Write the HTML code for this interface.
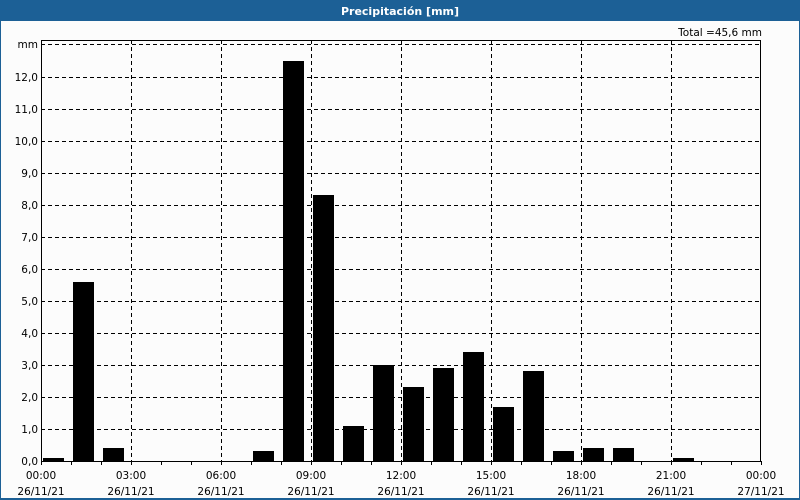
<!DOCTYPE html>
<html><head><meta charset="utf-8"><style>
html,body{margin:0;padding:0;width:800px;height:500px;overflow:hidden;background:#fcfcfc}
</style></head><body>
<svg width="800" height="500" xmlns="http://www.w3.org/2000/svg" font-family="'DejaVu Sans','Liberation Sans',sans-serif" font-size="10.5">
<rect x="0" y="0" width="800" height="500" fill="#1c6096"/>
<rect x="1" y="21" width="798" height="477" fill="#fcfcfc"/>
<text x="400" y="15" fill="#fff" font-weight="bold" text-anchor="middle" font-size="11">Precipitación [mm]</text>
<text x="762" y="36" text-anchor="end" fill="#000">Total =45,6 mm</text>
<g stroke="#000" stroke-width="1" stroke-dasharray="4,3" fill="none">
<line x1="41" y1="44.5" x2="760" y2="44.5"/>
<g id="h"></g>
</g>
<g id="grid" stroke="#000" stroke-width="1" stroke-dasharray="4,3"></g>
<g id="bars" fill="#000"></g>
<g id="labels" fill="#000"></g>
<rect x="41.5" y="40.5" width="719" height="421" fill="none" stroke="#000"/>
<text x="38" y="48" text-anchor="end">mm</text>
</svg>
<script>
var ns="http://www.w3.org/2000/svg",g=document.getElementById("grid"),b=document.getElementById("bars"),l=document.getElementById("labels");
function el(p,t,a){var e=document.createElementNS(ns,t);for(var k in a)e.setAttribute(k,a[k]);p.appendChild(e);return e;}
for(var i=1;i<=12;i++){var y=461-32*i+.5;el(g,"line",{x1:41,y1:y,x2:760,y2:y});}
for(var i=1;i<8;i++){var x=41+90*i+.5;el(g,"line",{x1:x,y1:40,x2:x,y2:461});}
for(var i=0;i<=24;i++){var x=41+30*i+.5;el(l,"line",{x1:x,y1:461,x2:x,y2:465,stroke:"#000"});}
for(var i=0;i<=12;i++){var t=el(l,"text",{x:38,y:461-32*i+4,"text-anchor":"end"});t.textContent=i+",0";}
var v=[0.1,5.6,0.4,0,0,0,0,0.3,12.5,8.3,1.1,3.0,2.3,2.9,3.4,1.7,2.8,0.3,0.4,0.4,0,0.1,0,0];
v.forEach(function(h,i){if(h>0){var hh=Math.round(h*32);el(b,"rect",{x:43+30*i,y:461-hh,width:21,height:hh});}});
var tm=["00:00","03:00","06:00","09:00","12:00","15:00","18:00","21:00","00:00"];
for(var i=0;i<9;i++){var x=41+90*i;var a=el(l,"text",{x:x,y:479,"text-anchor":"middle"});a.textContent=tm[i];
var d=el(l,"text",{x:x,y:495,"text-anchor":"middle"});d.textContent=i==8?"27/11/21":"26/11/21";}
</script>
</body></html>
